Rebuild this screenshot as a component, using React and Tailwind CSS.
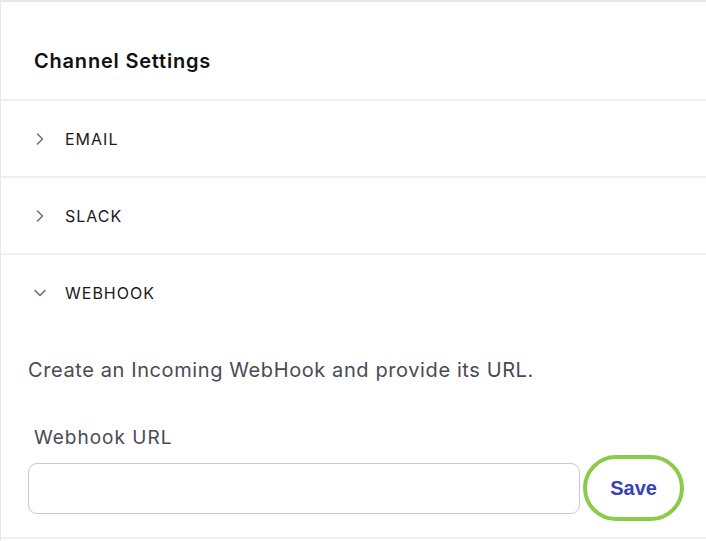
import React, { useState } from 'react';

const channels = ['EMAIL', 'SLACK', 'WEBHOOK'];

function Chevron({ open }) {
  return (
    <svg width="12" height="12" viewBox="0 0 12 12" fill="none" className="text-gray-500">
      {open ? (
        <path d="M1 3.5l5 5 5-5" stroke="currentColor" strokeWidth="1.6" strokeLinecap="round" strokeLinejoin="round" />
      ) : (
        <path d="M3.5 1l5 5-5 5" stroke="currentColor" strokeWidth="1.6" strokeLinecap="round" strokeLinejoin="round" />
      )}
    </svg>
  );
}

export default function App() {
  const [open, setOpen] = useState('WEBHOOK');
  const [url, setUrl] = useState('');

  return (
    <div
      className="w-[706px] h-[541px] bg-white border-t-2 border-l border-[#e8e8e8] overflow-hidden"
      style={{ fontFamily: 'Inter, "Noto Sans", sans-serif' }}
    >
      {/* Header */}
      <div className="h-[99px] flex items-end pb-[24px] px-[33px] border-b-2 border-[#f0f0f0]">
        <h2 className="text-[20px] leading-[28px] font-semibold text-[#111] tracking-[0.8px]">Channel Settings</h2>
      </div>

      {channels.map((name) => {
        const isOpen = open === name;
        return (
          <div key={name} className={isOpen ? '' : 'border-b-2 border-[#f0f0f0]'}>
            <button
              onClick={() => setOpen(isOpen ? null : name)}
              className="w-full h-[75px] flex items-center gap-[19px] pl-[33px] text-left"
            >
              <Chevron open={isOpen} />
              <span className="text-[16px] text-[#1a1a1a] tracking-[1px]">{name}</span>
            </button>

            {isOpen && name === 'WEBHOOK' && (
              <div className="pl-[27px] pr-[22px] pt-[25px] pb-[16px] border-b-2 border-[#f0f0f0]">
                <p className="text-[20px] leading-[30px] text-[#4a4a55] tracking-[0.6px]">
                  Create an Incoming WebHook and provide its URL.
                </p>
                <label className="block mt-[39px] ml-[6px] text-[19px] leading-[28px] text-[#4a4a55] tracking-[1px]">
                  Webhook URL
                </label>
                <div className="mt-[3px] flex items-center gap-[3px]">
                  <input
                    value={url}
                    onChange={(e) => setUrl(e.target.value)}
                    className="w-[553px] h-[51px] rounded-[9px] border border-[#c9c9cf] px-3 text-[16px] outline-none"
                  />
                  <button
                    className="w-[101px] h-[66px] rounded-full border-[4px] border-[#8bcb4a] text-[20px] font-bold text-[#3443b8]"
                    style={{ fontFamily: '"Liberation Sans", Arial, sans-serif' }}
                  >
                    Save
                  </button>
                </div>
              </div>
            )}
          </div>
        );
      })}
    </div>
  );
}
